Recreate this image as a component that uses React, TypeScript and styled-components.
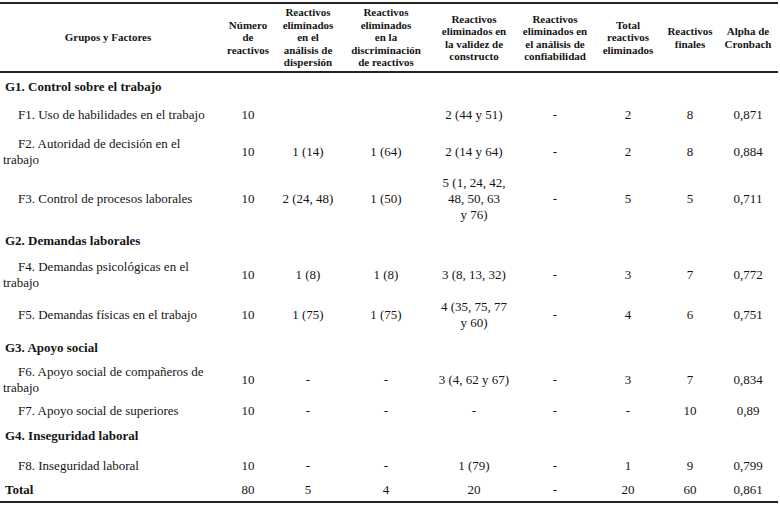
import { ReactElement } from 'react';
import styled, { createGlobalStyle, css } from 'styled-components';

const SERIF = '"Liberation Serif", "Times New Roman", Times, serif';

const GlobalStyle = createGlobalStyle`
  body {
    margin: 0;
    background: #fff;
    font-family: ${SERIF};
    color: #151515;
  }
`;

const LINE = '#232323';

const Table = styled.table`
  width: 778px;
  margin-top: 2px;
  table-layout: fixed;
  border-collapse: separate;
  border-spacing: 0;
  font-family: ${SERIF};
  font-size: 13px;
  line-height: 16px;
  color: #151515;

  th,
  td {
    font-family: ${SERIF};
  }
`;

const Col = styled.col<{ $w: number }>`
  width: ${(p) => p.$w}px;
`;

const HeadCell = styled.th<{ $pr?: number }>`
  box-sizing: border-box;
  height: 71px;
  padding: 0 ${(p) => p.$pr ?? 0}px 0 0;
  border-top: 2px solid ${LINE};
  border-bottom: 2px solid ${LINE};
  font-size: 11px;
  line-height: 12.5px;
  font-weight: 700;
  text-align: center;
  vertical-align: middle;
  white-space: pre;
`;

const Row = styled.tr<{ $h: number; $last?: boolean }>`
  & > td {
    box-sizing: border-box;
    height: ${(p) => p.$h}px;
    padding: 0;
    vertical-align: middle;
    white-space: pre;
  }

  ${(p) =>
    p.$last &&
    css`
      & > td {
        border-bottom: 2px solid ${LINE};
      }
    `}
`;

const GroupCell = styled.td`
  && {
    padding-left: 5px;
  }
  font-weight: 700;
  text-align: left;
`;

const NameCell = styled.td`
  && {
    padding-left: 3px;
  }
  text-indent: 15px;
  text-align: left;
`;

const DataCell = styled.td`
  text-align: center;
`;

const widths = [220, 56, 64, 92, 84, 78, 68, 56, 60];

const headers = [
  'Grupos y Factores',
  'Número\nde\nreactivos',
  'Reactivos\neliminados\nen el\nanálisis de\ndispersión',
  'Reactivos\neliminados\nen la\ndiscriminación\nde reactivos',
  'Reactivos\neliminados en\nla validez de\nconstructo',
  'Reactivos\neliminados en\nel análisis de\nconfiabilidad',
  'Total\nreactivos\neliminados',
  'Reactivos\nfinales',
  'Alpha de\nCronbach',
];

type TableRow =
  | { kind: 'group'; label: string; h: number }
  | { kind: 'factor'; name: string; cells: string[]; h: number }
  | { kind: 'total'; cells: string[]; h: number };

const rows: TableRow[] = [
  { kind: 'group', label: 'G1. Control sobre el trabajo', h: 28 },
  {
    kind: 'factor',
    name: 'F1. Uso de habilidades en el trabajo',
    cells: ['10', '', '', '2 (44 y 51)', '-', '2', '8', '0,871'],
    h: 28,
  },
  {
    kind: 'factor',
    name: 'F2. Autoridad de decisión en el\ntrabajo',
    cells: ['10', '1 (14)', '1 (64)', '2 (14 y 64)', '-', '2', '8', '0,884'],
    h: 46,
  },
  {
    kind: 'factor',
    name: 'F3. Control de procesos laborales',
    cells: ['10', '2 (24, 48)', '1 (50)', '5 (1, 24, 42,\n48, 50, 63\ny 76)', '-', '5', '5', '0,711'],
    h: 48,
  },
  { kind: 'group', label: 'G2. Demandas laborales', h: 36 },
  {
    kind: 'factor',
    name: 'F4. Demandas psicológicas en el\ntrabajo',
    cells: ['10', '1 (8)', '1 (8)', '3 (8, 13, 32)', '-', '3', '7', '0,772'],
    h: 32,
  },
  {
    kind: 'factor',
    name: 'F5. Demandas físicas en el trabajo',
    cells: ['10', '1 (75)', '1 (75)', '4 (35, 75, 77\ny 60)', '-', '4', '6', '0,751'],
    h: 48,
  },
  { kind: 'group', label: 'G3. Apoyo social', h: 18 },
  {
    kind: 'factor',
    name: 'F6. Apoyo social de compañeros de\ntrabajo',
    cells: ['10', '-', '-', '3 (4, 62 y 67)', '-', '3', '7', '0,834'],
    h: 46,
  },
  {
    kind: 'factor',
    name: 'F7. Apoyo social de superiores',
    cells: ['10', '-', '-', '-', '-', '-', '10', '0,89'],
    h: 16,
  },
  { kind: 'group', label: 'G4. Inseguridad laboral', h: 34 },
  {
    kind: 'factor',
    name: 'F8. Inseguridad laboral',
    cells: ['10', '-', '-', '1 (79)', '-', '1', '9', '0,799'],
    h: 26,
  },
  {
    kind: 'total',
    cells: ['80', '5', '4', '20', '-', '20', '60', '0,861'],
    h: 24,
  },
];

const App = (): ReactElement => {
  return (
    <>
      <GlobalStyle />
      <Table>
        <colgroup>
          {widths.map((w, i) => (
            <Col key={i} $w={w} />
          ))}
        </colgroup>
        <thead>
          <tr>
            {headers.map((text, i) => (
              <HeadCell key={i} $pr={i === 0 ? 4 : 0}>
                {text}
              </HeadCell>
            ))}
          </tr>
        </thead>
        <tbody>
          {rows.map((row, i) => {
            if (row.kind === 'group') {
              return (
                <Row key={i} $h={row.h}>
                  <GroupCell colSpan={9}>{row.label}</GroupCell>
                </Row>
              );
            }
            return (
              <Row key={i} $h={row.h} $last={row.kind === 'total'}>
                {row.kind === 'total' ? (
                  <GroupCell>Total</GroupCell>
                ) : (
                  <NameCell>{row.name}</NameCell>
                )}
                {row.cells.map((c, j) => (
                  <DataCell key={j}>{c}</DataCell>
                ))}
              </Row>
            );
          })}
        </tbody>
      </Table>
    </>
  );
};

export default App;
